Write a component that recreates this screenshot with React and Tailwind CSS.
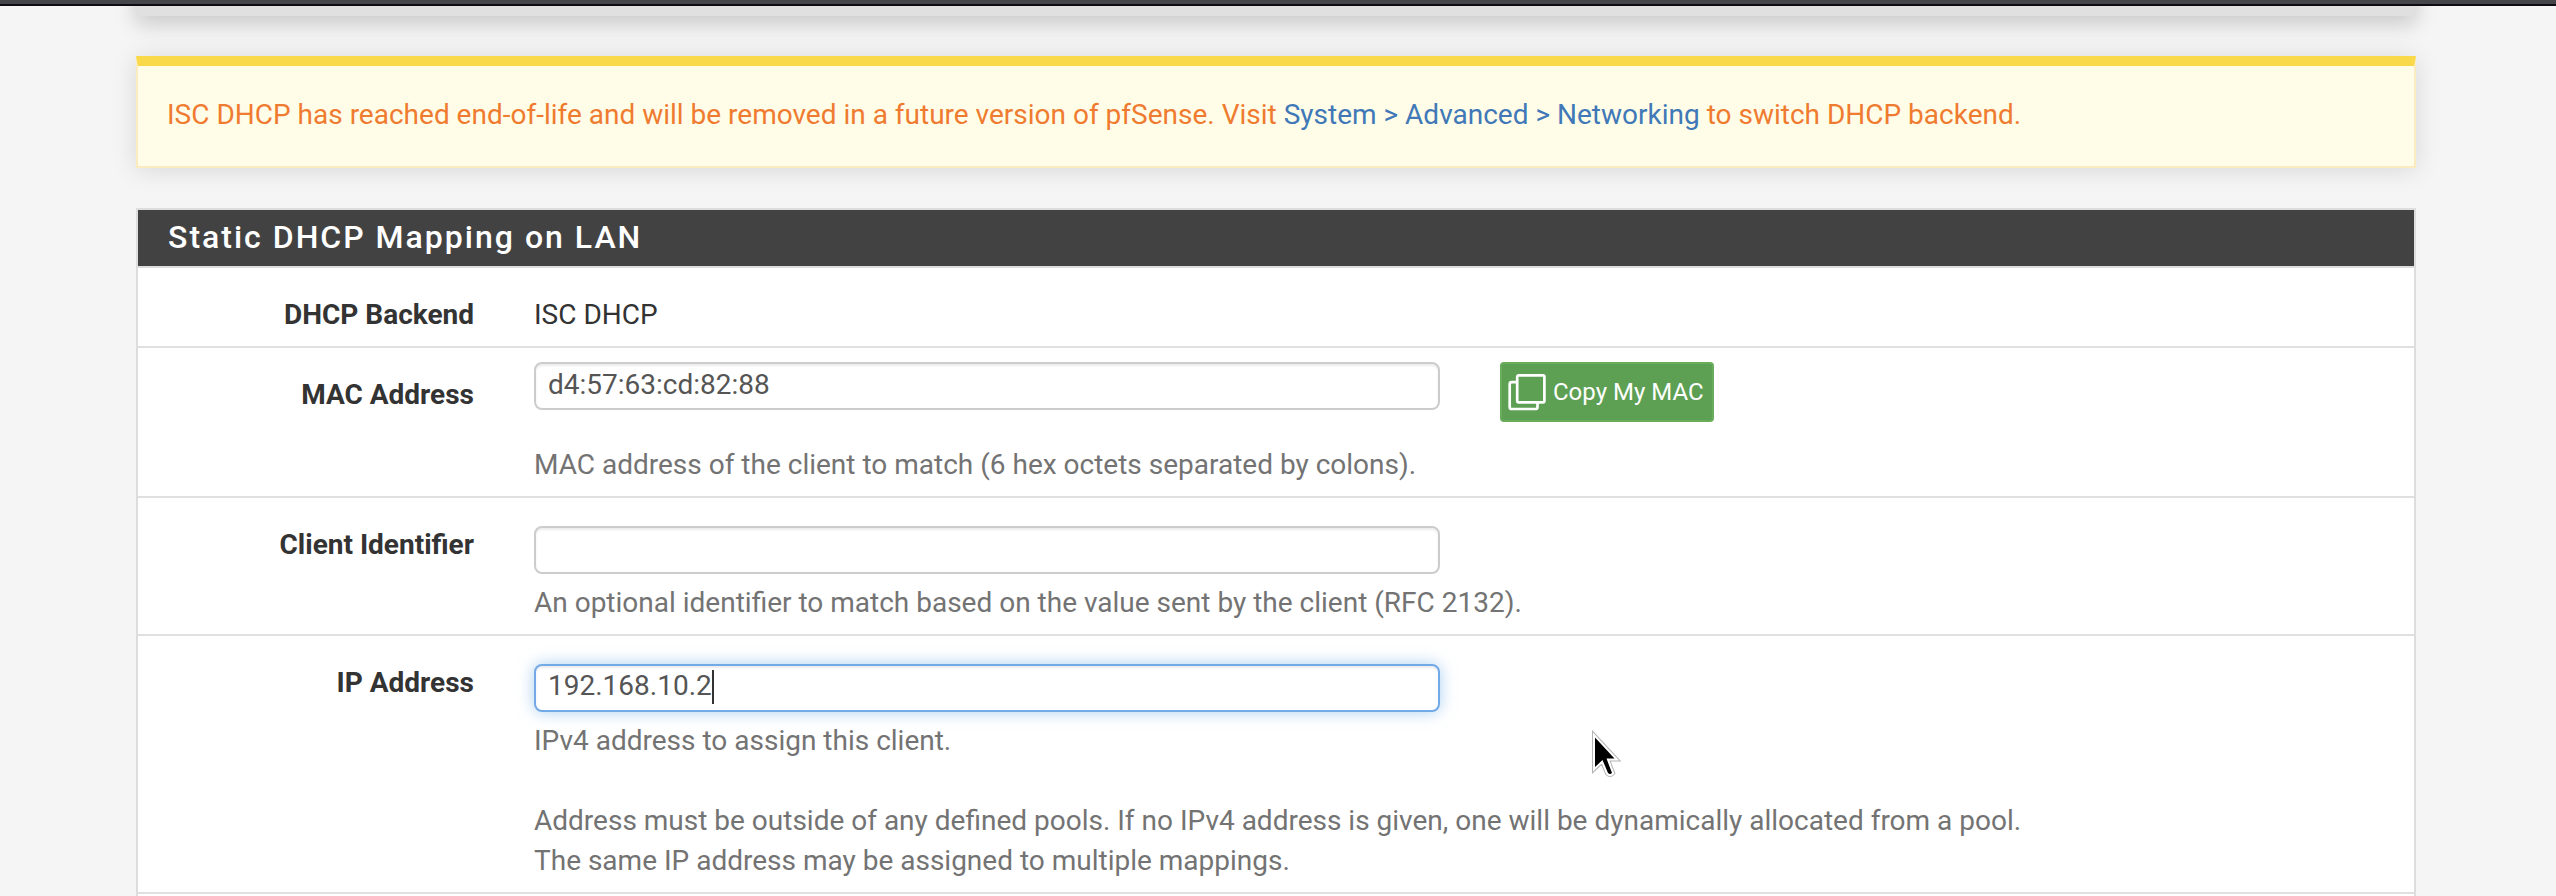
function Row({ label, className, children }) {
  return (
    <div className={`flex border-b-2 border-[#e0e0e0] ${className}`}>
      <div className="w-[336px] shrink-0 pt-[27px] text-right font-bold text-[#333]">{label}</div>
      <div className="ml-[60px] grow">{children}</div>
    </div>
  );
}

const inputClass =
  "block h-12 w-[906px] rounded-lg border-2 bg-white pl-3 pr-3 text-[#555] outline-none";

function CopyIcon() {
  return (
    <svg width="38" height="38" viewBox="0 0 38 38" fill="none" stroke="#fff" strokeWidth="2.7" className="shrink-0">
      <rect x="9.2" y="2.3" width="27.2" height="27" rx="1.5" />
      <path d="M9 9.2H3.7a2 2 0 0 0-2 2V34a2 2 0 0 0 2 2h23.8a2 2 0 0 0 2-2v-4.6" />
    </svg>
  );
}

function Pointer() {
  const arrow = "M5 7.5V37l7.5-7 5.5 13q2 2 4 0l-5.5-14.5h8z";
  return (
    <svg className="absolute left-[1590px] top-[730px]" width="34" height="52" viewBox="0 0 34 52">
      <path d={arrow} fill="none" stroke="#b4b4b4" strokeWidth="6" />
      <path d={arrow} fill="none" stroke="#fff" strokeWidth="4" />
      <path d={arrow} fill="#000" />
    </svg>
  );
}

export default function App() {
  return (
    <div className="relative h-[896px] w-[2556px] overflow-hidden bg-[#f5f5f5] font-['Roboto',sans-serif] text-[28px] leading-10 text-[#333]">
      <div className="relative z-10 h-1.5 border-b-2 border-[#0e0b12] bg-[#45464a]" />
      <div className="ml-[136px] w-[2280px]">
        <div className="-mt-[60px] h-[70px] bg-[#e0e0e0] shadow-[0_8px_20px_rgba(0,0,0,0.18)]" />
        <div className="mt-10 h-28 border-2 border-t-[10px] border-[#fbecc0] border-t-[#f9d849] bg-[#fffde7] pl-[29px] pt-[29px] text-[#ef7b30] shadow-[0_2px_24px_rgba(0,0,0,0.12)]">
          ISC DHCP has reached end-of-life and will be removed in a future version of pfSense. Visit{" "}
          <a className="text-[#4078b8]">System &gt; Advanced &gt; Networking</a> to switch DHCP backend.
        </div>
        <div className="mt-10 h-[700px] border-2 border-[#ddd] bg-white">
          <h2 className="h-[58px] border-b-2 border-[#ddd] bg-[#424242] pl-[30px] text-[32px] font-medium leading-[54px] tracking-[2px] text-white">
            Static DHCP Mapping on LAN
          </h2>
          <Row label="DHCP Backend" className="h-20">
            <div className="pt-[27px]">ISC DHCP</div>
          </Row>
          <Row label="MAC Address" className="h-[150px]">
            <div className="flex pt-[14px]">
              <input className={`${inputClass} border-[#ccc] pb-[3px] shadow-[inset_0_2px_2px_rgba(0,0,0,0.075)]`} defaultValue="d4:57:63:cd:82:88" />
              <button className="ml-[60px] flex h-[60px] w-[214px] items-center gap-[7px] whitespace-nowrap rounded border-2 border-[#68ac5c] bg-[#5d9f53] pl-1.5 text-[24px] text-white">
                <CopyIcon />
                Copy My MAC
              </button>
            </div>
            <div className="pt-[23px] text-[#737373]">MAC address of the client to match (6 hex octets separated by colons).</div>
          </Row>
          <Row label="Client Identifier" className="h-[138px]">
            <div className="pt-7">
              <input className={`${inputClass} border-[#ccc] shadow-[inset_0_2px_2px_rgba(0,0,0,0.075)]`} />
            </div>
            <div className="pt-[9px] text-[#737373]">An optional identifier to match based on the value sent by the client (RFC 2132).</div>
          </Row>
          <Row label="IP Address" className="h-[258px]">
            <div className="pt-7">
              <div className={`${inputClass} flex border-[#73a9e6] leading-10 shadow-[inset_0_2px_2px_rgba(0,0,0,0.075),0_0_16px_rgba(115,175,233,0.6)]`}>
                192.168.10.2
                <span className="mt-1 h-[34px] w-0.5 bg-[#333]" />
              </div>
            </div>
            <div className="pt-[9px] text-[#737373]">
              IPv4 address to assign this client.
              <br />
              <br />
              Address must be outside of any defined pools. If no IPv4 address is given, one will be dynamically allocated from a pool.
              <br />
              The same IP address may be assigned to multiple mappings.
            </div>
          </Row>
        </div>
      </div>
      <Pointer />
    </div>
  );
}
